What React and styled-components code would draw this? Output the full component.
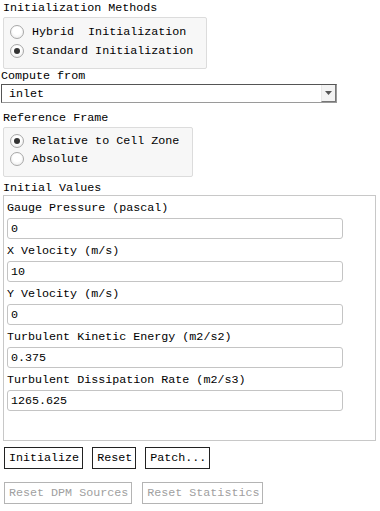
import React, { useState } from 'react';
import styled, { createGlobalStyle } from 'styled-components';

const GlobalStyle = createGlobalStyle`
    body {
        margin: 0;
        background: #ffffff;
        font-family: "Liberation Mono", "DejaVu Sans Mono", monospace;
        font-size: 11.7px;
        color: #000;
    }
`;

// Layout
const Panel = styled.div`
    width: 380px;
    height: 511px;
    padding-top: 1px;
    box-sizing: border-box;
`;

const SectionLabel = styled.div`
    height: 14px;
    line-height: 14px;
    margin-left: ${(p) => p.$indent ?? 3}px;
    margin-top: ${(p) => p.$top ?? 0}px;
    white-space: pre;
`;

const RadioBox = styled.div`
    display: inline-flex;
    flex-direction: column;
    margin: 2px 0 0 3px;
    padding: 4px 13px 8px 6px;
    border: 1px solid #dcdcdc;
    border-radius: 2px;
    background: #f7f7f7;
`;

const RadioRow = styled.label`
    display: flex;
    align-items: center;
    gap: 8px;
    height: ${(p) => p.$h ?? 19}px;
    white-space: pre;
    cursor: default;
`;

const RadioDot = styled.span`
    width: 12px;
    height: 12px;
    border-radius: 50%;
    border: 1px solid #a8a8a8;
    background: radial-gradient(circle at 50% 40%, #ffffff 40%, #e6e6e6 100%);
    display: flex;
    align-items: center;
    justify-content: center;
    flex-shrink: 0;

    &::after {
        content: '';
        width: 6px;
        height: 6px;
        border-radius: 50%;
        background: ${(p) => (p.$checked ? '#333' : 'transparent')};
    }
`;

const Select = styled.div`
    display: flex;
    align-items: center;
    width: 336px;
    height: 19px;
    margin: 1px 0 0 1px;
    box-sizing: border-box;
    border: 1px solid #555;
    border-right-color: #9a9a9a;
    border-bottom-color: #9a9a9a;
    background: #fff;
`;

const SelectText = styled.span`
    flex: 1;
    padding-left: 7px;
`;

const SelectButton = styled.span`
    width: 15px;
    height: 17px;
    box-sizing: border-box;
    border-left: 1px solid #e8e8e8;
    border-right: 1px solid #777;
    border-bottom: 1px solid #777;
    background: #f3f3f3;
    display: flex;
    align-items: center;
    justify-content: center;
`;

const ValuesBox = styled.div`
    margin: 0 4px 0 3px;
    padding: 5px 32px 29px 3px;
    border: 1px solid #c8c8c8;
`;

const FieldLabel = styled.div`
    height: 14px;
    line-height: 14px;
    margin-top: ${(p) => (p.$first ? 0 : 5)}px;
`;

const Field = styled.input`
    display: block;
    width: 100%;
    height: 21px;
    margin-top: 3px;
    padding: 0 3px;
    box-sizing: border-box;
    border: 1px solid #c4c4c4;
    border-radius: 3px;
    font-family: inherit;
    font-size: inherit;
    color: #000;
    outline: none;
`;

const ButtonRow = styled.div`
    display: flex;
    gap: ${(p) => p.$gap}px;
    margin: ${(p) => p.$top}px 0 0 4px;
`;

const Button = styled.button`
    height: 22px;
    padding: 0 3px 0 4px;
    font-family: inherit;
    font-size: inherit;
    background: #fff;
    color: ${(p) => (p.disabled ? '#a0a0a0' : '#000')};
    border: 1px solid ${(p) => (p.disabled ? '#b4b4b4' : '#222')};
    border-radius: 0;
    white-space: pre;
`;

const initMethods = ['Hybrid  Initialization', 'Standard Initialization'];
const frames = ['Relative to Cell Zone', 'Absolute'];

const fields = [
    { label: 'Gauge Pressure (pascal)', value: '0' },
    { label: 'X Velocity (m/s)', value: '10' },
    { label: 'Y Velocity (m/s)', value: '0' },
    { label: 'Turbulent Kinetic Energy (m2/s2)', value: '0.375' },
    { label: 'Turbulent Dissipation Rate (m2/s3)', value: '1265.625' },
];

const App = () => {
    const [method, setMethod] = useState(1);
    const [frame, setFrame] = useState(0);
    const [values, setValues] = useState(fields.map((f) => f.value));

    return (
        <Panel>
            <GlobalStyle />
            <SectionLabel>Initialization Methods</SectionLabel>
            <RadioBox>
                {initMethods.map((m, i) => (
                    <RadioRow key={m} onClick={() => setMethod(i)}>
                        <RadioDot $checked={method === i} />
                        {m}
                    </RadioRow>
                ))}
            </RadioBox>

            <SectionLabel $indent={1}>Compute from</SectionLabel>
            <Select>
                <SelectText>inlet</SelectText>
                <SelectButton>
                    <svg width="7" height="4" viewBox="0 0 7 4">
                        <path d="M0 0h7L3.5 4z" fill="#555" />
                    </svg>
                </SelectButton>
            </Select>

            <SectionLabel $top={8}>Reference Frame</SectionLabel>
            <RadioBox>
                {frames.map((f, i) => (
                    <RadioRow key={f} $h={18} onClick={() => setFrame(i)}>
                        <RadioDot $checked={frame === i} />
                        {f}
                    </RadioRow>
                ))}
            </RadioBox>

            <SectionLabel $top={4}>Initial Values</SectionLabel>
            <ValuesBox>
                {fields.map((f, i) => (
                    <div key={f.label}>
                        <FieldLabel $first={i === 0}>{f.label}</FieldLabel>
                        <Field
                            value={values[i]}
                            onChange={(e) => {
                                const next = [...values];
                                next[i] = e.target.value;
                                setValues(next);
                            }}
                        />
                    </div>
                ))}
            </ValuesBox>

            <ButtonRow $gap={9} $top={6}>
                <Button>Initialize</Button>
                <Button>Reset</Button>
                <Button>Patch...</Button>
            </ButtonRow>
            <ButtonRow $gap={10} $top={13}>
                <Button disabled>Reset DPM Sources</Button>
                <Button disabled>Reset Statistics</Button>
            </ButtonRow>
        </Panel>
    );
};

export default App;
